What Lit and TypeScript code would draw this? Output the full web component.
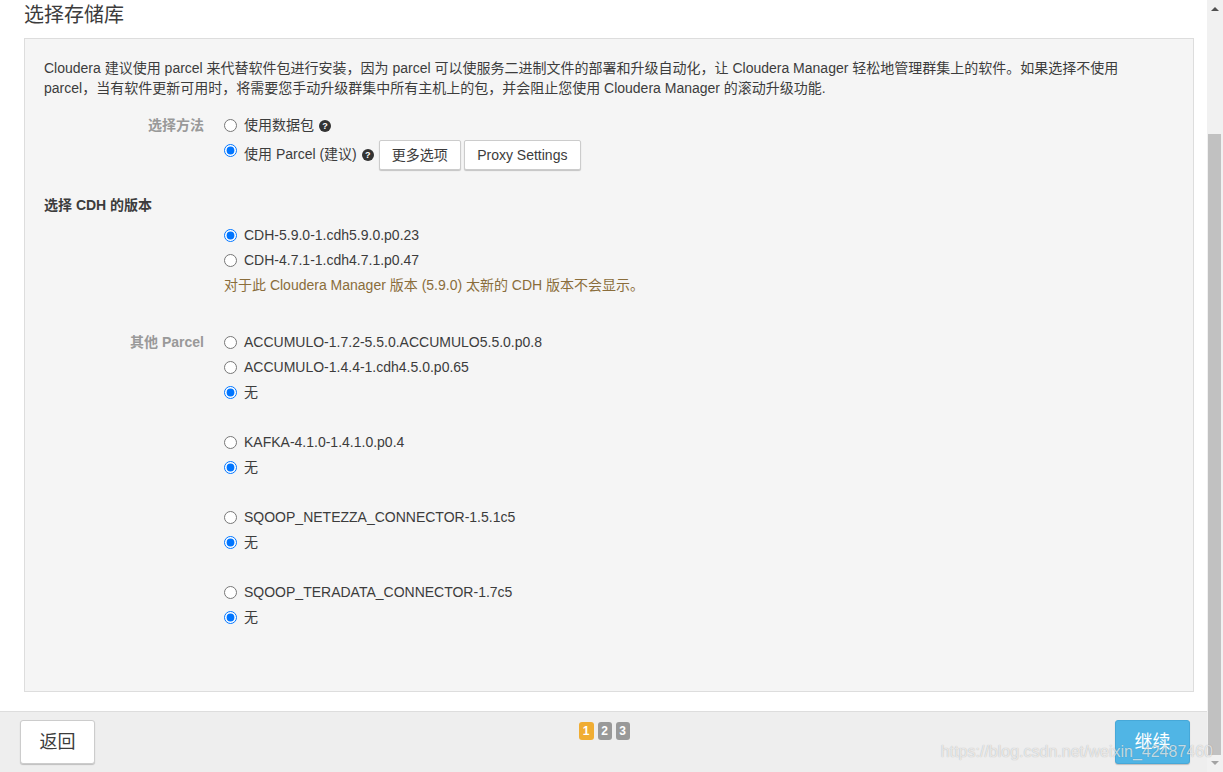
import { LitElement, html, css } from "lit";
import { customElement } from "lit/decorators.js";

const groups: { name: string; options: string[]; checked: number; label?: string }[] = [
  { name: "accumulo", label: "其他 Parcel", options: ["ACCUMULO-1.7.2-5.5.0.ACCUMULO5.5.0.p0.8", "ACCUMULO-1.4.4-1.cdh4.5.0.p0.65", "无"], checked: 2 },
  { name: "kafka", options: ["KAFKA-4.1.0-1.4.1.0.p0.4", "无"], checked: 1 },
  { name: "netezza", options: ["SQOOP_NETEZZA_CONNECTOR-1.5.1c5", "无"], checked: 1 },
  { name: "teradata", options: ["SQOOP_TERADATA_CONNECTOR-1.7c5", "无"], checked: 1 },
];

@customElement("app-root")
export class AppRoot extends LitElement {
  static styles = css`
    :host {
      display: flex;
      width: 1223px;
      height: 772px;
      overflow: hidden;
      background: #fff;
      color: #3c3c3c;
      font-family: "Liberation Sans", "Noto Sans CJK SC", sans-serif;
      font-size: 14px;
      line-height: 20px;
      position: relative;
    }
    * { box-sizing: border-box; }
    .main { flex: 1; min-width: 0; display: flex; flex-direction: column; }
    .title { height: 38px; padding: 0 24px; font-size: 20px; line-height: 30px; font-weight: 400; margin: 0; flex: none; }
    .panel {
      flex: 1;
      margin: 0 13px 19px 24px;
      border: 1px solid #ddd;
      background: #f5f5f5;
      padding: 19px 19px 0;
    }
    .intro { margin: 0 0 15px; }
    .row { display: grid; grid-template-columns: 160px 1fr; column-gap: 20px; }
    .label { text-align: right; font-weight: 700; color: #999; line-height: 25px; }
    .opt { display: flex; align-items: center; height: 25px; }
    .opt input { width: 13px; height: 13px; margin: 0 7px 0 0; flex: none; }
    .opt .text { margin-bottom: 2px; }
    .opt.tall { height: 34px; }
    .opt.tall input { align-self: flex-start; margin-top: 6px; }
    .help {
      display: inline-flex; align-items: center; justify-content: center;
      width: 12px; height: 12px; border-radius: 50%;
      background: #333; color: #fff; font-size: 9px; font-weight: 700; line-height: 12px;
      margin-left: 5px; flex: none;
    }
    button {
      font: inherit; color: #3c3c3c; background: #fff;
      border: 1px solid #ccc; border-radius: 2px;
      box-shadow: 0 1px 1px rgba(0, 0, 0, .2);
      height: 30px; padding: 0 12px;
    }
    .opt button.first { margin-left: 5px; }
    .opt button + button { margin-left: 3px; min-width: 117px; }
    .heading { font-weight: 700; margin: 23px 0 8px; }
    .note { color: #8a6d3b; line-height: 25px; }
    .cdh { margin-bottom: 32px; }
    .group { margin-bottom: 25px; }
    .footer {
      flex: none; height: 61px;
      background: #eee; border-top: 1px solid #ddd;
      padding: 8px 17px 0 20px;
      display: flex; justify-content: space-between; align-items: flex-start;
    }
    .footer button { width: 75px; height: 44px; padding: 0; font-size: 18px; border-radius: 3px; }
    .footer button.primary { background: #50b5e5; border-color: #46a8d8; color: #fff; }
    .steps { display: flex; gap: 4px; margin: 2px 0 0 -2px; }
    .step {
      width: 14px; height: 18px; border-radius: 3px;
      background: #999; color: #fff; font-size: 12px; font-weight: 700; line-height: 18px; text-align: center;
    }
    .step.on { background: #f0ad33; width: 15px; }
    .scrollbar { width: 16px; flex: none; background: #f1f1f1; display: flex; flex-direction: column; align-items: center; }
    .arrow { width: 0; height: 0; border-left: 4px solid transparent; border-right: 4px solid transparent; flex: none; }
    .arrow.up { border-bottom: 4px solid #505050; margin-top: 7px; }
    .arrow.down { border-top: 4px solid #a3a3a3; margin-top: 6px; }
    .thumb { width: 13px; height: 621px; margin-top: 123px; background: #c1c1c1; flex: none; margin-left: -1px; }
    .watermark {
      position: absolute; right: 10px; bottom: 10px;
      font-size: 16px; line-height: 20px; color: rgba(255, 255, 255, .7);
      text-shadow: 0 0 1px rgba(0, 0, 0, .3); white-space: nowrap;
    }
  `;

  private opt(name: string, text: string, checked: boolean) {
    return html`<label class="opt"><input type="radio" name=${name} ?checked=${checked} /><span class="text">${text}</span></label>`;
  }

  render() {
    return html`
      <div class="main">
        <h2 class="title">选择存储库</h2>
        <div class="panel">
          <p class="intro">Cloudera 建议使用 parcel 来代替软件包进行安装，因为 parcel 可以使服务二进制文件的部署和升级自动化，让 Cloudera Manager 轻松地管理群集上的软件。如果选择不使用<br />parcel，当有软件更新可用时，将需要您手动升级群集中所有主机上的包，并会阻止您使用 Cloudera Manager 的滚动升级功能.</p>
          <div class="row">
            <div class="label">选择方法</div>
            <div>
              <label class="opt"><input type="radio" name="method" /><span class="text">使用数据包</span><span class="help">?</span></label>
              <div class="opt tall">
                <input type="radio" name="method" checked />
                <span class="text">使用 Parcel (建议)</span><span class="help">?</span>
                <button class="first">更多选项</button><button>Proxy Settings</button>
              </div>
            </div>
          </div>
          <div class="heading">选择 CDH 的版本</div>
          <div class="row cdh">
            <div></div>
            <div>
              ${this.opt("cdh", "CDH-5.9.0-1.cdh5.9.0.p0.23", true)}
              ${this.opt("cdh", "CDH-4.7.1-1.cdh4.7.1.p0.47", false)}
              <div class="note">对于此 Cloudera Manager 版本 (5.9.0) 太新的 CDH 版本不会显示。</div>
            </div>
          </div>
          ${groups.map(
            (g) => html`<div class="row group">
              <div class="label">${g.label ?? ""}</div>
              <div>${g.options.map((o, i) => this.opt(g.name, o, i === g.checked))}</div>
            </div>`
          )}
        </div>
        <div class="footer">
          <button>返回</button>
          <div class="steps">
            <div class="step on">1</div><div class="step">2</div><div class="step">3</div>
          </div>
          <button class="primary">继续</button>
        </div>
      </div>
      <div class="scrollbar">
        <div class="arrow up"></div>
        <div class="thumb"></div>
        <div class="arrow down"></div>
      </div>
      <div class="watermark">https://blog.csdn.net/weixin_42487460</div>
    `;
  }
}
